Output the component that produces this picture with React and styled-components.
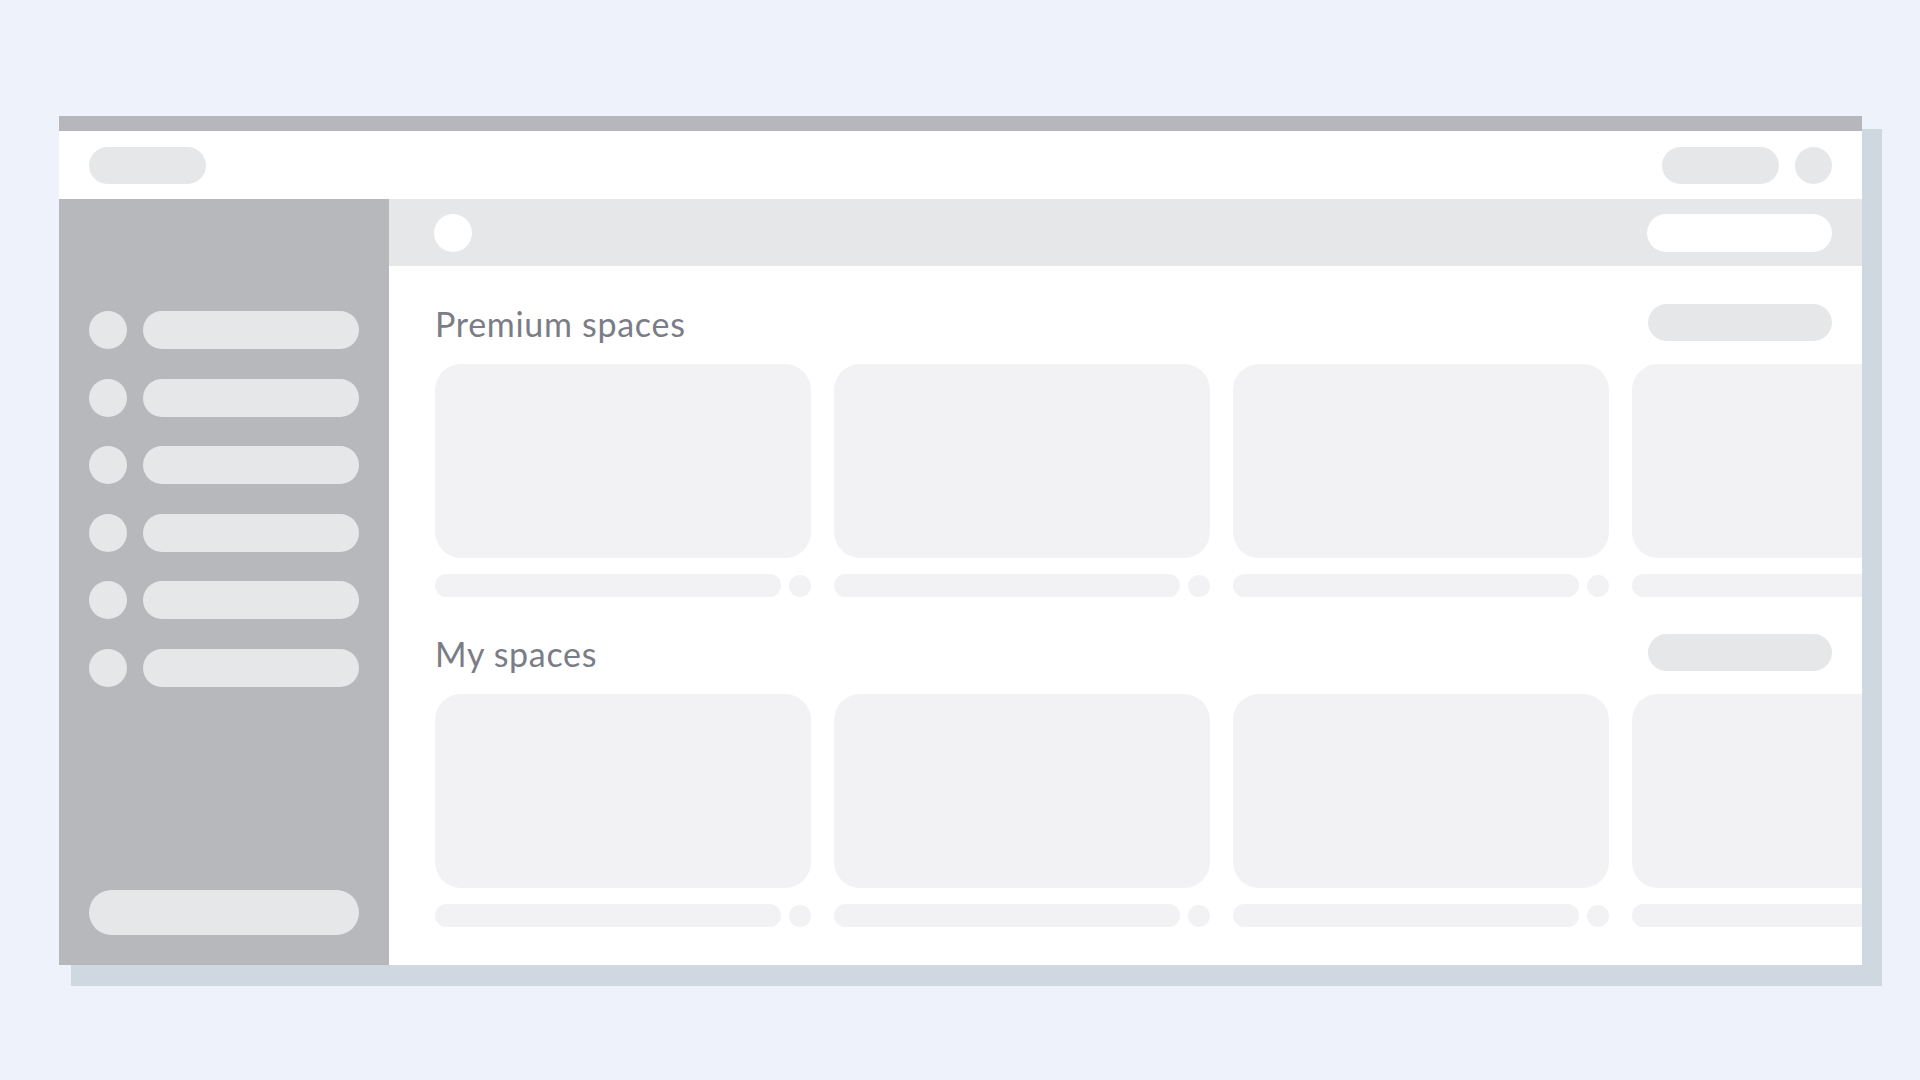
import styled, { createGlobalStyle } from "styled-components";

const GlobalStyle = createGlobalStyle`
  html, body {
    margin: 0;
    padding: 0;
  }
  body {
    background: #eef3fb;
    font-family: "Lato", "Liberation Sans", sans-serif;
  }
`;

const Page = styled.div`
  min-height: 100vh;
  box-sizing: border-box;
  padding: 116px 0 0 59px;
  background: #eef3fb;
`;

const Window = styled.div`
  width: 1803px;
  height: 849px;
  background: #ffffff;
  box-shadow: 16px 17px 0 4px #cfd7e1;
  display: flex;
  flex-direction: column;
  overflow: hidden;
`;

const TopStrip = styled.div`
  height: 15px;
  background: #b5b7bc;
  flex-shrink: 0;
`;

const Header = styled.header`
  height: 68px;
  flex-shrink: 0;
  display: flex;
  align-items: center;
  justify-content: space-between;
  padding: 0 30px;
`;

const HeaderRight = styled.div`
  display: flex;
  align-items: center;
  gap: 16px;
`;

const Pill = styled.div`
  width: ${(p) => p.$w || 117}px;
  height: ${(p) => p.$h || 37}px;
  border-radius: 999px;
  background: ${(p) => p.$bg || "#e6e7e9"};
  flex-shrink: 0;
`;

const Dot = styled.div`
  width: ${(p) => p.$size || 37}px;
  height: ${(p) => p.$size || 37}px;
  border-radius: 50%;
  background: ${(p) => p.$bg || "#e6e7e9"};
  flex-shrink: 0;
`;

const Body = styled.div`
  flex: 1;
  display: flex;
  min-height: 0;
`;

const Sidebar = styled.aside`
  width: 330px;
  flex-shrink: 0;
  box-sizing: border-box;
  background: #b7b8bc;
  padding: 112px 30px 30px;
  display: flex;
  flex-direction: column;
`;

const NavList = styled.div`
  display: flex;
  flex-direction: column;
  gap: 29.6px;
`;

const NavRow = styled.div`
  display: flex;
  align-items: center;
  gap: 16px;
`;

const NavBar = styled.div`
  flex: 1;
  height: 38px;
  border-radius: 999px;
  background: #e6e7e9;
`;

const SideButton = styled.div`
  margin-top: auto;
  height: 45px;
  border-radius: 999px;
  background: #e6e7e9;
`;

const Main = styled.main`
  flex: 1;
  min-width: 0;
  overflow: hidden;
  display: flex;
  flex-direction: column;
`;

const SubBar = styled.div`
  height: 67px;
  flex-shrink: 0;
  background: #e6e7e9;
  display: flex;
  align-items: center;
  justify-content: space-between;
  padding: 0 30px 0 45px;
`;

const Content = styled.div`
  padding: 38px 30px 0 46px;
`;

const Section = styled.section`
  & + & {
    margin-top: 37px;
  }
`;

const SectionHead = styled.div`
  height: 37px;
  display: flex;
  align-items: center;
  justify-content: space-between;
`;

const Title = styled.h2`
  margin: 0;
  font-family: "Lato", "Liberation Sans", sans-serif;
  font-weight: 400;
  font-size: 34px;
  letter-spacing: 0.7px;
  line-height: 37px;
  color: #7a7d86;
  padding-top: 1px;
`;

const Cards = styled.div`
  margin-top: 23px;
  display: flex;
  gap: 23px;
`;

const Card = styled.div`
  flex: 0 0 376px;
  display: flex;
  flex-direction: column;
`;

const Thumb = styled.div`
  height: 194px;
  border-radius: 26px;
  background: #f2f2f4;
`;

const Caption = styled.div`
  margin-top: 16px;
  display: flex;
  align-items: center;
  gap: 8px;
`;

const CaptionBar = styled.div`
  flex: 1;
  height: 23px;
  border-radius: 999px;
  background: #f2f2f4;
`;

function SpaceSection({ title }) {
  return (
    <Section>
      <SectionHead>
        <Title>{title}</Title>
        <Pill $w={184} $h={37} />
      </SectionHead>
      <Cards>
        {[0, 1, 2, 3].map((i) => (
          <Card key={i}>
            <Thumb />
            <Caption>
              <CaptionBar />
              <Dot $size={22} $bg="#f2f2f4" />
            </Caption>
          </Card>
        ))}
      </Cards>
    </Section>
  );
}

export default function App() {
  return (
    <>
      <GlobalStyle />
      <Page>
        <Window>
          <TopStrip />
          <Header>
            <Pill />
            <HeaderRight>
              <Pill />
              <Dot />
            </HeaderRight>
          </Header>
          <Body>
            <Sidebar>
              <NavList>
                {[0, 1, 2, 3, 4, 5].map((i) => (
                  <NavRow key={i}>
                    <Dot $size={38} />
                    <NavBar />
                  </NavRow>
                ))}
              </NavList>
              <SideButton />
            </Sidebar>
            <Main>
              <SubBar>
                <Dot $size={38} $bg="#ffffff" />
                <Pill $w={185} $h={38} $bg="#ffffff" />
              </SubBar>
              <Content>
                <SpaceSection title="Premium spaces" />
                <SpaceSection title="My spaces" />
              </Content>
            </Main>
          </Body>
        </Window>
      </Page>
    </>
  );
}
